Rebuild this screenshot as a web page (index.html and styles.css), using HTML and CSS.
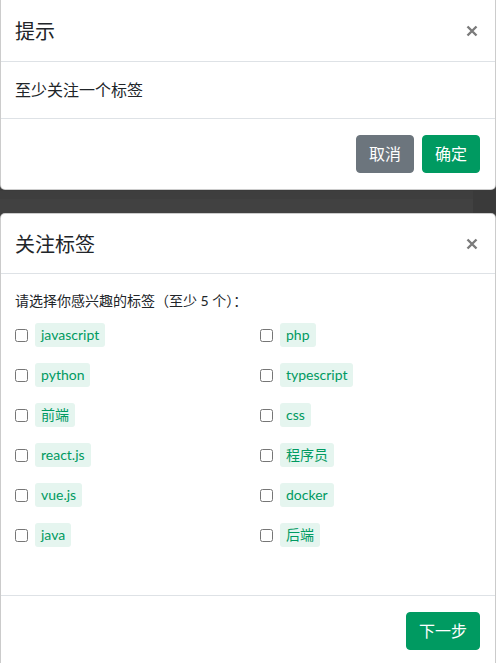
FILE: index.html
```html
<!DOCTYPE html>
<html lang="zh-CN">
<head>
<meta charset="utf-8">
<title>关注标签</title>
<link rel="stylesheet" href="styles.css">
</head>
<body>
<div class="modal modal-alert">
  <div class="modal-header">
    <h5 class="modal-title">提示</h5>
    <button class="close" type="button" aria-label="Close">
      <svg width="12" height="12" viewBox="0 0 12 12"><path d="M1.5 1.5 L10.5 10.5 M10.5 1.5 L1.5 10.5" stroke="#7b7b7b" stroke-width="2.4" stroke-linecap="butt"/></svg>
    </button>
  </div>
  <div class="modal-body body-lg">至少关注一个标签</div>
  <div class="modal-footer">
    <button class="btn btn-secondary" type="button">取消</button>
    <button class="btn btn-primary" type="button">确定</button>
  </div>
</div>

<div class="backdrop-strip">
  <div class="strip-main"></div>
  <div class="strip-side"></div>
</div>

<div class="modal modal-tags">
  <div class="modal-header">
    <h5 class="modal-title">关注标签</h5>
    <button class="close" type="button" aria-label="Close">
      <svg width="12" height="12" viewBox="0 0 12 12"><path d="M1.5 1.5 L10.5 10.5 M10.5 1.5 L1.5 10.5" stroke="#7b7b7b" stroke-width="2.4" stroke-linecap="butt"/></svg>
    </button>
  </div>
  <div class="modal-body body-sm">
    <p class="hint">请选择你感兴趣的标签（至少 5 个）：</p>
    <div class="tag-grid">
      <label class="tag-item"><input type="checkbox"><span class="tag">javascript</span></label>
      <label class="tag-item"><input type="checkbox"><span class="tag">php</span></label>
      <label class="tag-item"><input type="checkbox"><span class="tag">python</span></label>
      <label class="tag-item"><input type="checkbox"><span class="tag">typescript</span></label>
      <label class="tag-item"><input type="checkbox"><span class="tag">前端</span></label>
      <label class="tag-item"><input type="checkbox"><span class="tag">css</span></label>
      <label class="tag-item"><input type="checkbox"><span class="tag">react.js</span></label>
      <label class="tag-item"><input type="checkbox"><span class="tag">程序员</span></label>
      <label class="tag-item"><input type="checkbox"><span class="tag">vue.js</span></label>
      <label class="tag-item"><input type="checkbox"><span class="tag">docker</span></label>
      <label class="tag-item"><input type="checkbox"><span class="tag">java</span></label>
      <label class="tag-item"><input type="checkbox"><span class="tag">后端</span></label>
    </div>
  </div>
  <div class="modal-footer">
    <button class="btn btn-primary" type="button">下一步</button>
  </div>
</div>
</body>
</html>
```

FILE: styles.css
```css
* { box-sizing: border-box; }

html, body {
  margin: 0;
  padding: 0;
}

body {
  width: 496px;
  height: 663px;
  overflow: hidden;
  background: #3f3f3f;
  font-family: Lato, "Noto Sans CJK SC", sans-serif;
  color: #212529;
}

.modal {
  background: #fff;
  width: 496px;
  border: 1px solid rgba(0, 0, 0, 0.2);
  border-top: 0;
}

.modal-alert {
  border-radius: 0 0 5px 5px;
}

.modal-tags {
  border-top: 1px solid rgba(0, 0, 0, 0.2);
  border-radius: 5px 5px 0 0;
  height: 452px;
  border-bottom: 0;
}

.modal-header {
  display: flex;
  align-items: center;
  justify-content: space-between;
  padding: 16px 16px 16px 14px;
  border-bottom: 1px solid #dee2e6;
  height: 62px;
}

.modal-tags .modal-header {
  height: 60px;
}

.modal-title {
  margin: 0;
  font-size: 20px;
  line-height: 30px;
  font-weight: 400;
  color: #212529;
}

.close {
  border: 0;
  background: transparent;
  padding: 0;
  margin-right: 1px;
  width: 12px;
  height: 12px;
  display: flex;
}

.modal-body {
  padding: 16px 16px 16px 14px;
  border-bottom: 1px solid #dee2e6;
}

.body-lg {
  font-size: 16px;
  line-height: 24px;
  height: 57px;
}

.body-sm {
  font-size: 14px;
  line-height: 21px;
  height: 322px;
}

.hint {
  margin: 0 0 12px 0;
}

.tag-grid {
  display: grid;
  grid-template-columns: 221px 1fr;
  column-gap: 24px;
  row-gap: 16px;
}

.tag-item {
  display: flex;
  align-items: center;
  height: 24px;
}

.tag-item input {
  margin: 0 7px 0 0;
  width: 13px;
  height: 13px;
}

.tag {
  display: inline-block;
  height: 24px;
  line-height: 24px;
  padding: 0 6px;
  font-size: 14px;
  color: #009a61;
  background: #e5f5ef;
  border-radius: 3px;
}

.modal-footer {
  display: flex;
  justify-content: flex-end;
  gap: 8px;
  padding: 16px 15px 16px 16px;
}

.btn {
  font-family: Lato, "Noto Sans CJK SC", sans-serif;
  font-size: 16px;
  line-height: 24px;
  height: 38px;
  padding: 6px 12px;
  border: 1px solid transparent;
  border-radius: 4px;
  color: #fff;
}

.btn-secondary {
  background: #6c757d;
  border-color: #6c757d;
}

.btn-primary {
  background: #009a61;
  border-color: #009a61;
}

.backdrop-strip {
  display: flex;
  height: 23px;
}

.strip-main {
  flex: 0 0 473px;
  background: #414141;
  border-top: 1px solid #3b3b3b;
  box-shadow: inset 0 8px 0 #3e3e3e;
}

.strip-side {
  flex: 1;
  background: #3a3a3a;
}
```
